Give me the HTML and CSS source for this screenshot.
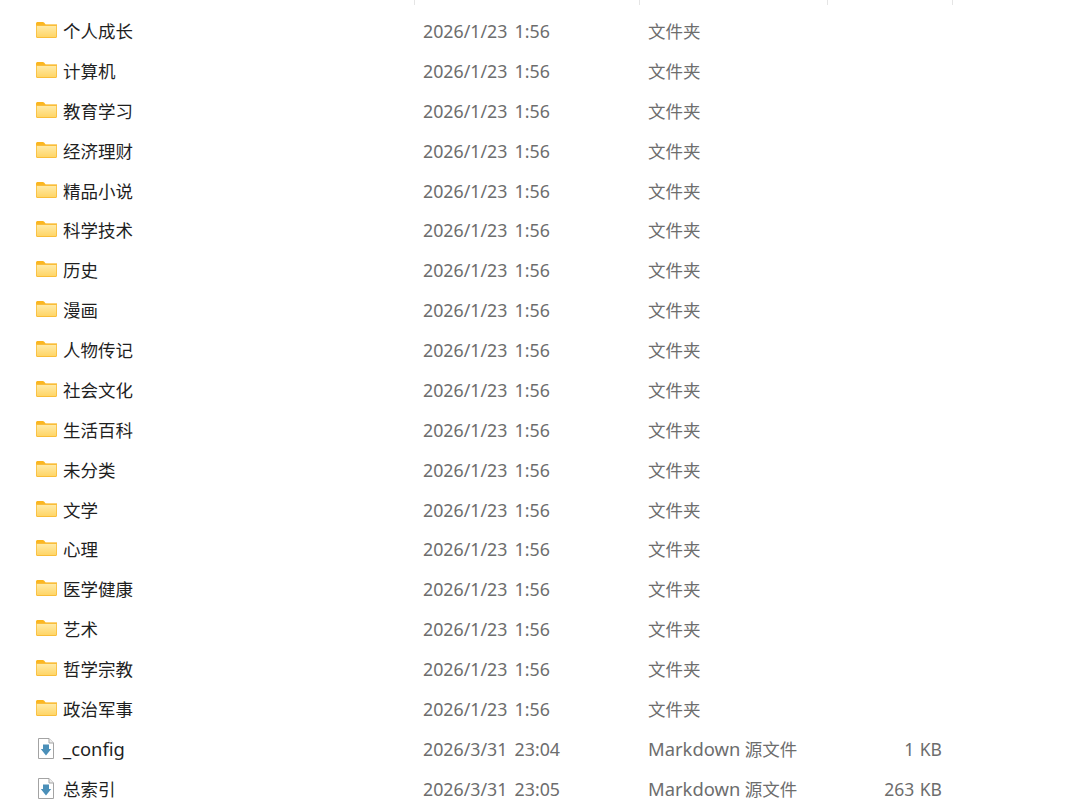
FILE: index.html
```html
<!DOCTYPE html>
<html lang="zh-CN">
<head>
    <meta charset="utf-8">
    <title>文件列表</title>
    <link rel="stylesheet" href="styles.css">
</head>
<body>
    <svg class="defs" width="0" height="0">
        <defs>
            <linearGradient id="folderFill" x1="0" y1="0" x2="0" y2="1">
                <stop offset="0" stop-color="#ffeaa6"/>
                <stop offset="1" stop-color="#ffd566"/>
            </linearGradient>
            <symbol id="folder" viewBox="0 0 21 16">
                <path d="M0 1.600C0 .7.700 0 1.600 0h5.200c.5 0 .9.200 1.300.6L9.600 2.400H21v3H0z" fill="#fbb61f"/>
                <path d="M0 2.800h21v12c0 .7-.5 1.200-1.200 1.200H1.200C.5 16 0 15.500 0 14.800z" fill="#f9bd3a"/>
                <path d="M.8 4h19.400v10.600c0 .3-.2.5-.5.500H1.300c-.3 0-.5-.2-.5-.5z" fill="url(#folderFill)"/>
            </symbol>
            <symbol id="mdfile" viewBox="0 0 16 21">
                <path d="M.5.500h10.500l4.500 4.500v15.500H.5z" fill="#fff" stroke="#a3a3a3"/>
                <path d="M11 .5v4.500h4.500" fill="#eee" stroke="#a3a3a3"/>
                <path d="M5 6.500h6v4.500h2.200L8 17.500 2.800 11H5z" fill="#4a8fb8"/>
            </symbol>
        </defs>
    </svg>

    <div class="header-ticks">
        <span></span><span></span><span></span><span></span>
    </div>

    <div class="file-list" id="fileList"></div>

    <script>
        const folders = ['个人成长', '计算机', '教育学习', '经济理财', '精品小说', '科学技术', '历史', '漫画', '人物传记',
            '社会文化', '生活百科', '未分类', '文学', '心理', '医学健康', '艺术', '哲学宗教', '政治军事'];
        const files = [
            { name: '<span class="latin">_config</span>', date: '2026/3/31 23:04', size: '1 KB' },
            { name: '总索引', date: '2026/3/31 23:05', size: '263 KB' }
        ];
        const mdType = '<span class="latin">Markdown</span> 源文件';

        function addRow(icon, name, date, type, size) {
            const row = document.createElement('div');
            row.className = 'row';
            row.innerHTML = `
                <div class="name"><svg class="icon icon-${icon}"><use href="#${icon}"/></svg><span>${name}</span></div>
                <div class="date">${date}</div>
                <div class="type">${type}</div>
                <div class="size">${size}</div>`;
            document.getElementById('fileList').appendChild(row);
        }

        folders.forEach((name) => addRow('folder', name, '2026/1/23 1:56', '文件夹', ''));
        files.forEach((f) => addRow('mdfile', f.name, f.date, mdType, f.size));
    </script>
</body>
</html>
```

FILE: styles.css
```css
* {
    margin: 0;
    padding: 0;
    box-sizing: border-box;
}

body {
    font-family: "Noto Sans", "Noto Sans CJK SC", sans-serif;
    font-size: 17.5px;
    background: white;
    color: #1f1f1f;
    height: 812px;
    overflow: hidden;
}

.defs {
    display: block;
}

.header-ticks {
    display: grid;
    grid-template-columns: 415px 225px 188px 125px;
    height: 5px;
}

.header-ticks span {
    border-right: 1px solid #e5e5e5;
}

.file-list {
    padding-top: 6px;
}

.row {
    display: grid;
    grid-template-columns: 423px 225px 188px 106px;
    height: 39.88px;
    align-items: center;
    line-height: 40px;
    white-space: nowrap;
}

.name {
    display: flex;
    align-items: center;
    padding-left: 36px;
}

.icon {
    flex-shrink: 0;
}

.icon-folder {
    width: 21px;
    height: 16px;
    margin-right: 6px;
    transform: translateY(-1px);
}

.icon-mdfile {
    width: 16px;
    height: 21px;
    margin-left: 2px;
    margin-right: 9px;
}

.latin {
    font-size: 18.4px;
}

.date,
.type,
.size {
    color: #6d6d6d;
}

.date {
    font-size: 17.8px;
    word-spacing: 2.5px;
}

.size {
    text-align: right;
    word-spacing: 1px;
}
```
